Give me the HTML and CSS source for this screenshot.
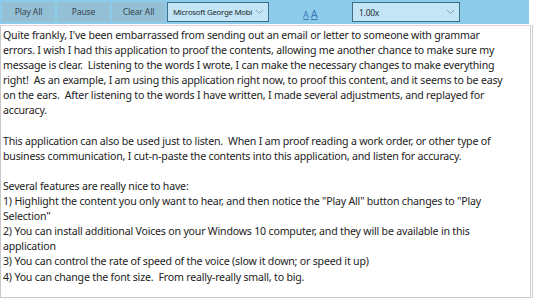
FILE: index.html
```html
<!DOCTYPE html>
<html>
<head>
<meta charset="utf-8">
<link rel="stylesheet" href="styles.css">
</head>
<body>
<div class="app">
  <div class="toolbar">
    <div class="btn">Play All</div>
    <div class="btn">Pause</div>
    <div class="btn">Clear All</div>
    <div class="combo voice"><span class="val">Microsoft George Mobi</span><svg class="chev" width="9" height="6" viewBox="0 0 9 6"><path d="M1 1 L4.5 4.5 L8 1" fill="none" stroke="#8aa0ad" stroke-width="1"/></svg></div>
    <div class="sizes"><span class="a small">A</span><span class="a big">A</span></div>
    <div class="combo rate"><span class="val">1.00x</span><svg class="chev" width="9" height="6" viewBox="0 0 9 6"><path d="M1 1 L4.5 4.5 L8 1" fill="none" stroke="#8aa0ad" stroke-width="1"/></svg></div>
  </div>
  <div class="editor">
    <div class="text">Quite frankly, I've been embarrassed from sending out an email or letter to someone with grammar<br>errors. I wish I had this application to proof the contents, allowing me another chance to make sure my<br>message is clear.&nbsp; Listening to the words I wrote, I can make the necessary changes to make everything<br>right!&nbsp; As an example, I am using this application right now, to proof this content, and it seems to be easy<br>on the ears.&nbsp; After listening to the words I have written, I made several adjustments, and replayed for<br>accuracy.<br><br>This application can also be used just to listen.&nbsp; When I am proof reading a work order, or other type of<br>business communication, I cut-n-paste the contents into this application, and listen for accuracy.<br><br>Several features are really nice to have:<br>1) Highlight the content you only want to hear, and then notice the "Play All" button changes to "Play<br>Selection"<br>2) You can install additional Voices on your Windows 10 computer, and they will be available in this<br>application<br>3) You can control the rate of speed of the voice (slow it down; or speed it up)<br>4) You can change the font size.&nbsp; From really-really small, to big.</div>
  </div>
</div>
</body>
</html>
```
FILE: styles.css
```css
html, body {
  margin: 0;
  padding: 0;
  background: #ffffff;
}
.app {
  width: 538px;
  height: 302px;
  display: flex;
  flex-direction: column;
  font-family: "Noto Sans", "Open Sans", sans-serif;
}
.toolbar {
  height: 24px;
  width: 529px;
  background: #8ccbe9;
  display: flex;
  align-items: center;
  padding-left: 2px;
  box-sizing: border-box;
  flex-shrink: 0;
}
.btn {
  width: 53px;
  height: 20px;
  background: #94c0d5;
  color: #34444d;
  font-size: 8.6px;
  letter-spacing: -0.15px;
  display: flex;
  align-items: center;
  justify-content: center;
  margin-right: 2px;
  white-space: nowrap;
}
.combo {
  height: 20px;
  box-sizing: border-box;
  border: 1px solid #3f6f86;
  background: #c3e5f6;
  display: flex;
  align-items: center;
  gap: 2px;
  padding: 0 4px 0 5px;
  font-size: 7.9px;
  letter-spacing: -0.3px;
  color: #1d2a31;
  white-space: nowrap;
}
.val {
  flex: 1;
  min-width: 0;
}
.voice {
  width: 102px;
}
.rate {
  width: 108px;
  padding-left: 6px;
  font-size: 8.4px;
  letter-spacing: -0.2px;
}
.chev { flex-shrink: 0; }
.sizes {
  width: 83px;
  display: flex;
  justify-content: center;
  align-items: flex-end;
  gap: 2px;
  color: #3c79b8;
  padding-top: 2px;
}
.a {
  text-decoration: underline;
  line-height: 1;
}
.a.small { font-size: 9px; }
.a.big { font-size: 11px; }
.editor {
  flex: 1;
  margin: 1px 5px 4px 0;
  border: 1px solid #c9c9c9;
  border-top-color: #e6cfd6;
  border-right: 3px double #d0d0d0;
  background: #fff;
  overflow: hidden;
}
.text {
  padding: 2px 0 0 2px;
  font-size: 10.6px;
  letter-spacing: -0.2px;
  line-height: 15.1px;
  color: #222;
  white-space: nowrap;
}
```
